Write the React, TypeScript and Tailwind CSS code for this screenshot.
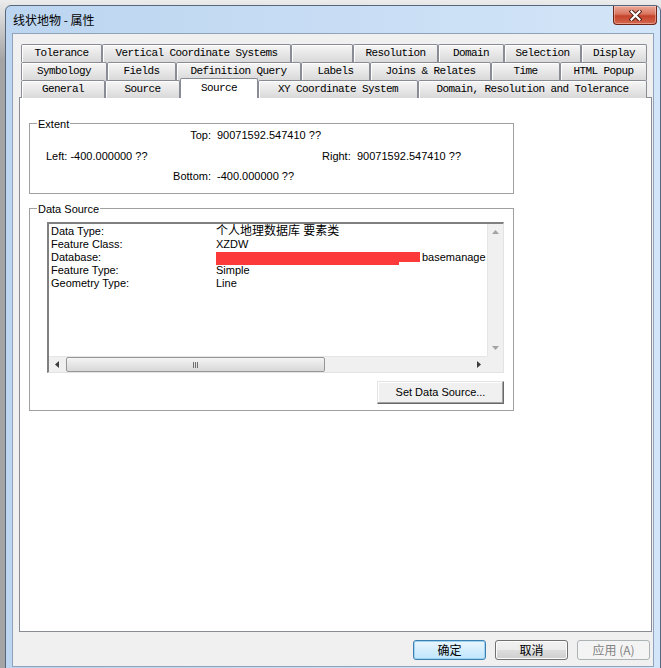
type TabDef = { label: string; w: string; active?: boolean };

const tabRows: TabDef[][] = [
  [
    { label: "Tolerance", w: "w-[81px]" },
    { label: "Vertical Coordinate Systems", w: "w-[189px]" },
    { label: "", w: "w-[62px]" },
    { label: "Resolution", w: "w-[85px]" },
    { label: "Domain", w: "w-[66px]" },
    { label: "Selection", w: "w-[77px]" },
    { label: "Display", w: "w-[66px]" },
  ],
  [
    { label: "Symbology", w: "w-[86px]" },
    { label: "Fields", w: "w-[69px]" },
    { label: "Definition Query", w: "w-[125px]" },
    { label: "Labels", w: "w-[69px]" },
    { label: "Joins & Relates", w: "w-[121px]" },
    { label: "Time", w: "w-[69px]" },
    { label: "HTML Popup", w: "w-[87px]" },
  ],
  [
    { label: "General", w: "w-[84px]" },
    { label: "Source", w: "w-[75px]" },
    { label: "Source", w: "w-[78px]", active: true },
    { label: "XY Coordinate System", w: "w-[160px]" },
    { label: "Domain, Resolution and Tolerance", w: "w-[229px]" },
  ],
];

const sourceRows = [
  { k: "Data Type:", v: "个人地理数据库 要素类" },
  { k: "Feature Class:", v: "XZDW" },
  { k: "Database:", v: "" },
  { k: "Feature Type:", v: "Simple" },
  { k: "Geometry Type:", v: "Line" },
];

const ui = "font-['Liberation_Sans','Noto_Sans_CJK_SC',sans-serif] text-[11px] text-black";

function Tab({ label, w, active }: TabDef) {
  if (active) {
    return (
      <div className={`${w} relative z-10 -mt-[2px] flex h-[20px] items-center justify-center whitespace-pre rounded-t-[2px] border border-b-0 border-[#898c95] bg-white`}>
        {label}
      </div>
    );
  }
  return (
    <div className={`${w} flex h-[18px] items-center justify-center whitespace-pre rounded-t-[2px] border border-b-0 border-[#898c95] bg-gradient-to-b from-[#f6f6f6] to-[#d9d9d9] shadow-[inset_1px_1px_0_#ffffff]`}>
      {label}
    </div>
  );
}

function Arrow({ dir, color }: { dir: "up" | "down" | "left" | "right"; color: string }) {
  const pts = {
    up: "0,4 7,4 3.5,0",
    down: "0,0 7,0 3.5,4",
    left: "4,0 4,7 0,3.5",
    right: "0,0 0,7 4,3.5",
  }[dir];
  const vert = dir === "up" || dir === "down";
  return (
    <svg width={vert ? 7 : 4} height={vert ? 4 : 7} viewBox={vert ? "0 0 7 4" : "0 0 4 7"}>
      <polygon points={pts} fill={color} />
    </svg>
  );
}

function GroupLabel({ text }: { text: string }) {
  return (
    <div className="-mb-[7px] -mt-[7px] ml-[7px] h-[14px] w-fit bg-white px-[1px] leading-[14px]">{text}</div>
  );
}

export default function App() {
  return (
    <div className="h-[668px] w-[661px] overflow-hidden bg-[linear-gradient(to_bottom,#ececec,#a4a4a4_60px)] pl-[5px] pt-[5px]">
      <div className="h-[680px] w-[656px] rounded-t-[6px] border border-[#55687e] bg-gradient-to-r from-[#bcd5f0] to-[#d3e5f8] px-[6px]">
        {/* caption bar */}
        <div className="-mx-[6px] flex h-[27px] items-start justify-between pl-[7px] pr-[3px]">
          <span className="self-center font-['Noto_Sans_CJK_SC',sans-serif] text-[12px] leading-[14px] text-black">线状地物 - 属性</span>
          <div className="flex h-[19px] w-[44px] items-center justify-center rounded-b-[4px] border border-t-0 border-[#6e2418] bg-[linear-gradient(to_bottom,#eaa999_0%,#d9745f_45%,#c4432b_55%,#d4664c_100%)] shadow-[inset_0_0_0_1px_rgba(255,220,210,0.45)]">
            <svg width="13" height="11" viewBox="0 0 13 11">
              <path d="M2.5 1.5 L10.5 9.5 M10.5 1.5 L2.5 9.5" stroke="#4a1a12" strokeWidth="4" strokeLinecap="square" />
              <path d="M2.5 1.5 L10.5 9.5 M10.5 1.5 L2.5 9.5" stroke="#ffffff" strokeWidth="2.2" strokeLinecap="square" />
            </svg>
          </div>
        </div>

        {/* client area */}
        <div className="h-[634px] border border-[#8fa3bb] bg-[#f0f0f0] pl-[6px] pt-[10px]">
          <div className="font-['Liberation_Mono',monospace] text-[11px] tracking-[-0.6px] text-black">
            {tabRows.map((row, i) => (
              <div key={i} className="ml-[2px] flex h-[18px] items-start">
                {row.map((t, j) => (
                  <Tab key={j} {...t} />
                ))}
              </div>
            ))}
          </div>

          <div className={`-mt-[1px] h-[535px] w-[633px] border border-[#898c95] bg-white pl-[9px] pt-[25px] ${ui}`}>
            {/* Extent */}
            <div className="h-[71px] w-[485px] border border-[#a0a0a0]">
              <GroupLabel text="Extent" />
              <div className="mt-[5px] flex h-[13px] items-center">
                <span className="w-[181px] text-right">Top:</span>
                <span className="ml-[6px]">90071592.547410 ??</span>
              </div>
              <div className="mt-[8px] flex h-[13px] items-center">
                <span className="w-[292px] pl-[16px]">Left: -400.000000 ??</span>
                <span className="w-[35px]">Right:</span>
                <span>90071592.547410 ??</span>
              </div>
              <div className="mt-[7px] flex h-[13px] items-center">
                <span className="w-[181px] text-right">Bottom:</span>
                <span className="ml-[6px]">-400.000000 ??</span>
              </div>
            </div>

            {/* Data Source */}
            <div className="mt-[14px] h-[203px] w-[485px] border border-[#a0a0a0]">
              <GroupLabel text="Data Source" />
              <div className="ml-[17px] mt-[13px] w-[457px] border-b border-l-2 border-r border-t-2 border-b-[#e3e3e3] border-l-[#808080] border-r-[#e3e3e3] border-t-[#808080] bg-white">
                <div className="flex h-[132px]">
                  <div className="w-[438px] pl-[2px] pt-[1px]">
                    {sourceRows.map((r) => (
                      <div key={r.k} className="flex h-[13px] items-center leading-[13px]">
                        <span className="w-[165px]">{r.k}</span>
                        {r.k === "Database:" ? (
                          <div className="flex items-start">
                            <div className="mt-[1px] flex flex-col">
                              <div className="h-[10px] w-[204px] bg-[#fd3a3a]" />
                              <div className="h-[3px] w-[183px] bg-[#fd3a3a]" />
                            </div>
                            <span className="ml-[2px]">basemanage</span>
                          </div>
                        ) : (
                          <span className={r.k === "Data Type:" ? "text-[12px]" : ""}>{r.v}</span>
                        )}
                      </div>
                    ))}
                  </div>
                  {/* vertical scrollbar */}
                  <div className="flex w-[16px] flex-col border-l border-[#e6e6e6] bg-[#f0f0f0]">
                    <div className="flex h-[16px] items-center justify-center">
                      <Arrow dir="up" color="#a3a3a3" />
                    </div>
                    <div className="flex-1" />
                    <div className="flex h-[16px] items-center justify-center">
                      <Arrow dir="down" color="#a3a3a3" />
                    </div>
                  </div>
                </div>
                {/* horizontal scrollbar */}
                <div className="flex h-[16px]">
                  <div className="flex w-[438px] items-center border-t border-[#e6e6e6] bg-[#f0f0f0]">
                    <div className="flex w-[16px] items-center justify-center">
                      <Arrow dir="left" color="#3c3c3c" />
                    </div>
                    <div className="ml-[1px] flex h-[15px] w-[259px] items-center justify-center gap-[1px] rounded-[2px] border border-[#979797] bg-gradient-to-b from-[#f4f4f4] to-[#d8d8d8]">
                      <div className="h-[6px] w-[1px] bg-[#6f6f6f]" />
                      <div className="h-[6px] w-[1px] bg-[#6f6f6f]" />
                      <div className="h-[6px] w-[1px] bg-[#6f6f6f]" />
                    </div>
                    <div className="flex-1" />
                    <div className="flex w-[16px] items-center justify-center">
                      <Arrow dir="right" color="#3c3c3c" />
                    </div>
                  </div>
                  <div className="w-[16px] bg-[#f0f0f0]" />
                </div>
              </div>
              <div className="ml-[347px] mt-[8px] flex h-[23px] w-[127px] items-center justify-center border border-b-[#696969] border-l-[#e3e3e3] border-r-[#696969] border-t-[#e3e3e3] bg-[#f0f0f0] shadow-[inset_-1px_-1px_0_#a0a0a0,inset_1px_1px_0_#ffffff]">
                Set Data Source...
              </div>
            </div>
          </div>

          {/* dialog buttons */}
          <div className="mt-[8px] flex justify-end gap-[9px] pr-[3px] font-['Noto_Sans_CJK_SC',sans-serif] text-[12px]">
            <div className="flex h-[20px] w-[73px] items-center justify-center rounded-[3px] border border-[#3c7fb1] bg-gradient-to-b from-[#eaf6fd] to-[#bee6fd] text-black shadow-[inset_0_0_0_1px_#9fd3f1]">
              确定
            </div>
            <div className="flex h-[20px] w-[73px] items-center justify-center rounded-[3px] border border-[#707070] bg-[linear-gradient(to_bottom,#f2f2f2_0%,#ebebeb_50%,#dddddd_50%,#cfcfcf_100%)] text-black shadow-[inset_0_0_0_1px_#fcfcfc]">
              取消
            </div>
            <div className="flex h-[20px] w-[73px] items-center justify-center rounded-[3px] border border-[#adb2b5] bg-[#f4f4f4] text-[#838383]">
              应用 (A)
            </div>
          </div>
        </div>
      </div>
    </div>
  );
}
